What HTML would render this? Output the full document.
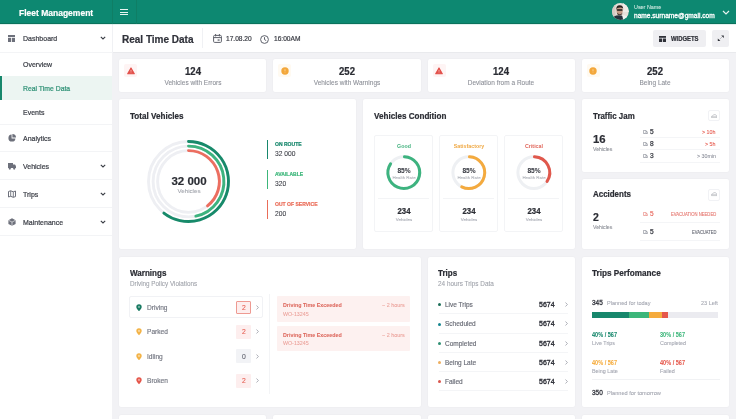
<!DOCTYPE html>
<html><head><meta charset="utf-8"><style>
html,body{margin:0;padding:0}
body{width:736px;height:419px;overflow:hidden;position:relative;background:#f2f2f5;font-family:"Liberation Sans",sans-serif}
.a{position:absolute}
.t{position:absolute;white-space:nowrap;line-height:1;will-change:transform}
</style></head><body>
<div class="a" style="left:0px;top:0px;width:736px;height:24px;background:#0d8871"></div>
<div class="a" style="left:0px;top:23px;width:736px;height:1px;background:#0b725c"></div>
<div class="a" style="left:112px;top:0px;width:1px;height:24px;background:#0f7e65"></div>
<div class="a" style="left:136px;top:0px;width:1px;height:24px;background:#0f7e65"></div>
<div class="t" style="left:19px;top:9px;font-size:8.5px;color:#fff;font-weight:700;-webkit-text-stroke:0.2px currentColor;transform:scaleY(1.15);transform-origin:50% 7px;">Fleet Management</div>
<div class="a" style="left:120px;top:9px;width:8px;height:1.3px;background:#e8f5f1"></div>
<div class="a" style="left:120px;top:11.5px;width:8px;height:1.3px;background:#e8f5f1"></div>
<div class="a" style="left:120px;top:14px;width:8px;height:1.3px;background:#e8f5f1"></div>
<svg class="a" style="left:612px;top:3.4px" width="17" height="17" viewBox="0 0 17 17"><defs><clipPath id="av"><circle cx="8.4" cy="8.5" r="8.4"/></clipPath></defs><g clip-path="url(#av)"><rect width="17" height="17" fill="#e6e0da"/><rect x="0" y="0" width="3.5" height="17" fill="#d7c9c4"/><rect x="11" y="0" width="6" height="9" fill="#efebe6"/><ellipse cx="7.6" cy="7.8" rx="3.1" ry="3.8" fill="#c49a86"/><path d="M4.3 7.2 Q3.8 2.2 7.8 2.3 Q11.6 2.5 11.1 6.6 L10.5 4.9 Q7.8 3.9 5 5.2Z" fill="#2a211e"/><rect x="4.8" y="6.3" width="5.8" height="1.5" rx="0.7" fill="#1b1818"/><path d="M5.2 9.8 Q7.6 12.6 10.2 9.9 L10.2 11.3 Q7.6 13 5.2 11.3Z" fill="#4a3630"/><path d="M0 17 Q1 12.4 6.8 12.2 Q9.6 12.2 11.4 13.6 L11.6 17Z" fill="#26303c"/><path d="M10.2 12.4 Q14.2 11.6 16.8 14.8 L17 17 H11.2Z" fill="#f0f2f0"/></g></svg>
<div class="t" style="left:634px;top:5px;font-size:5.4px;color:#cfe9e1;-webkit-text-stroke:0.08px currentColor;">User Name</div>
<div class="t" style="left:634px;top:13px;font-size:6.6px;color:#fff;-webkit-text-stroke:0.08px currentColor;-webkit-text-stroke:0.3px currentColor;">name.surname@gmail.com</div>
<svg class="a" style="left:722px;top:10px" width="8" height="5" viewBox="0 0 8 5"><path d="M1 1 L4 4 L7 1" fill="none" stroke="#e6f3ef" stroke-width="1.2"/></svg>
<div class="a" style="left:0px;top:24px;width:112px;height:395px;background:#fff"></div>
<div class="a" style="left:112px;top:24px;width:1px;height:28px;background:#f0f1f4"></div>
<div class="a" style="left:0px;top:52px;width:112px;height:1px;background:#f3f4f6"></div>
<div class="a" style="left:0px;top:123.5px;width:112px;height:1px;background:#f3f4f6"></div>
<div class="a" style="left:0px;top:151px;width:112px;height:1px;background:#f3f4f6"></div>
<div class="a" style="left:0px;top:179px;width:112px;height:1px;background:#f3f4f6"></div>
<div class="a" style="left:0px;top:207px;width:112px;height:1px;background:#f3f4f6"></div>
<div class="a" style="left:0px;top:235px;width:112px;height:1px;background:#f3f4f6"></div>
<div class="a" style="left:0px;top:76px;width:112px;height:24px;background:#ecf5f2"></div>
<div class="a" style="left:0px;top:76px;width:2px;height:24px;background:#17876c"></div>
<div class="t" style="left:23px;top:35px;font-size:7px;color:#3b3e46;-webkit-text-stroke:0.08px currentColor;transform:scaleY(1.12);transform-origin:50% 6px;-webkit-text-stroke:0.2px currentColor;">Dashboard</div>
<div class="t" style="left:23px;top:61px;font-size:7px;color:#3b3e46;-webkit-text-stroke:0.08px currentColor;transform:scaleY(1.12);transform-origin:50% 6px;-webkit-text-stroke:0.2px currentColor;">Overview</div>
<div class="t" style="left:23px;top:86px;font-size:6.85px;color:#2f9176;-webkit-text-stroke:0.08px currentColor;transform:scaleY(1.12);transform-origin:50% 5px;-webkit-text-stroke:0.2px currentColor;">Real Time Data</div>
<div class="t" style="left:23px;top:109px;font-size:7px;color:#3b3e46;-webkit-text-stroke:0.08px currentColor;transform:scaleY(1.12);transform-origin:50% 6px;-webkit-text-stroke:0.2px currentColor;">Events</div>
<div class="t" style="left:23px;top:135px;font-size:7px;color:#3b3e46;-webkit-text-stroke:0.08px currentColor;transform:scaleY(1.12);transform-origin:50% 6px;-webkit-text-stroke:0.2px currentColor;">Analytics</div>
<div class="t" style="left:23px;top:163px;font-size:7px;color:#3b3e46;-webkit-text-stroke:0.08px currentColor;transform:scaleY(1.12);transform-origin:50% 6px;-webkit-text-stroke:0.2px currentColor;">Vehicles</div>
<div class="t" style="left:23px;top:191px;font-size:7px;color:#3b3e46;-webkit-text-stroke:0.08px currentColor;transform:scaleY(1.12);transform-origin:50% 6px;-webkit-text-stroke:0.2px currentColor;">Trips</div>
<div class="t" style="left:23px;top:219px;font-size:7px;color:#3b3e46;-webkit-text-stroke:0.08px currentColor;transform:scaleY(1.12);transform-origin:50% 6px;-webkit-text-stroke:0.2px currentColor;">Maintenance</div>
<svg class="a" style="left:100.3px;top:36.300000000000004px" width="6" height="4" viewBox="0 0 6 4"><path d="M0.8 0.8 L3 3 L5.2 0.8" fill="none" stroke="#3b3e46" stroke-width="1.1"/></svg>
<svg class="a" style="left:100.3px;top:163.7px" width="6" height="4" viewBox="0 0 6 4"><path d="M0.8 0.8 L3 3 L5.2 0.8" fill="none" stroke="#3b3e46" stroke-width="1.1"/></svg>
<svg class="a" style="left:100.3px;top:191.7px" width="6" height="4" viewBox="0 0 6 4"><path d="M0.8 0.8 L3 3 L5.2 0.8" fill="none" stroke="#3b3e46" stroke-width="1.1"/></svg>
<svg class="a" style="left:100.3px;top:219.7px" width="6" height="4" viewBox="0 0 6 4"><path d="M0.8 0.8 L3 3 L5.2 0.8" fill="none" stroke="#3b3e46" stroke-width="1.1"/></svg>
<svg class="a" style="left:8px;top:35px" width="7" height="7" viewBox="0 0 7 7"><rect x="0" y="0" width="7" height="2" fill="#6d707b"/><rect x="0" y="2.8" width="3" height="4.2" fill="#6d707b"/><rect x="3.8" y="2.8" width="3.2" height="4.2" fill="#6d707b"/></svg>
<svg class="a" style="left:7.5px;top:133.5px" width="8" height="8" viewBox="0 0 8 8"><path d="M3.6 0.6 A3.5 3.5 0 1 0 7.4 4.4 L3.6 4.4Z" fill="#6d707b"/><path d="M4.4 0 A3.6 3.6 0 0 1 8 3.6 L4.4 3.6Z" fill="#6d707b"/></svg>
<svg class="a" style="left:7.5px;top:161.5px" width="8" height="8" viewBox="0 0 8 8"><path d="M0 1 H5 V6 H0Z" fill="#6d707b"/><path d="M5 2.5 H7 L8 4.2 V6 H5Z" fill="#6d707b"/><circle cx="1.8" cy="6.6" r="1.1" fill="#6d707b"/><circle cx="6.2" cy="6.6" r="1.1" fill="#6d707b"/></svg>
<svg class="a" style="left:7.5px;top:189.5px" width="8" height="8" viewBox="0 0 8 8"><path d="M0.5 1.5 L2.7 0.8 L5.3 1.8 L7.5 1 V6.6 L5.3 7.3 L2.7 6.3 L0.5 7Z" fill="none" stroke="#6d707b" stroke-width="1"/><path d="M2.7 0.8 V6.3 M5.3 1.8 V7.3" stroke="#6d707b" stroke-width="0.9"/></svg>
<svg class="a" style="left:7.5px;top:217.5px" width="8" height="8" viewBox="0 0 8 8"><path d="M4 0.3 L7.6 2.2 V5.9 L4 7.8 L0.4 5.9 V2.2Z" fill="#6d707b"/><path d="M0.6 2.3 L4 4.1 L7.4 2.3 M4 4.1 V7.6" fill="none" stroke="#fff" stroke-width="0.6"/></svg>
<div class="a" style="left:113px;top:24px;width:623px;height:28px;background:#fff"></div>
<div class="a" style="left:113px;top:52px;width:623px;height:1px;background:#e9eaed"></div>
<div class="a" style="left:202px;top:28px;width:1px;height:20px;background:#f0f1f4"></div>
<div class="t" style="left:121.5px;top:35px;font-size:10px;color:#30323a;font-weight:700;-webkit-text-stroke:0.2px currentColor;">Real Time Data</div>
<svg class="a" style="left:212.5px;top:34px" width="9" height="9" viewBox="0 0 9 9"><rect x="0.6" y="1.4" width="7.8" height="7" rx="1" fill="none" stroke="#5e616b" stroke-width="1"/><path d="M0.6 3.6 H8.4 M2.6 0 V2.4 M6.4 0 V2.4" stroke="#5e616b" stroke-width="1"/><rect x="4.6" y="5.4" width="2" height="1.3" fill="#5e616b"/></svg>
<div class="t" style="left:225.7px;top:36px;font-size:6.6px;color:#3a3c44;-webkit-text-stroke:0.08px currentColor;-webkit-text-stroke:0.2px currentColor;">17.08.20</div>
<svg class="a" style="left:260px;top:34.5px" width="9" height="9" viewBox="0 0 9 9"><circle cx="4.5" cy="4.5" r="3.9" fill="none" stroke="#5e616b" stroke-width="1"/><path d="M4.5 2.2 V4.6 L6.2 5.6" fill="none" stroke="#5e616b" stroke-width="1"/></svg>
<div class="t" style="left:273.6px;top:36px;font-size:6.6px;color:#3a3c44;-webkit-text-stroke:0.08px currentColor;-webkit-text-stroke:0.2px currentColor;">16:00AM</div>
<div class="a" style="left:653px;top:30px;width:53px;height:17px;background:#efeff2;border-radius:2px"></div>
<svg class="a" style="left:659px;top:35.5px" width="7" height="6.5" viewBox="0 0 7 6.5"><rect x="0" y="0" width="7" height="1.8" fill="#2f3138"/><rect x="0" y="2.5" width="3" height="4" fill="#2f3138"/><rect x="3.8" y="2.5" width="3.2" height="4" fill="#2f3138"/></svg>
<div class="t" style="left:670.7px;top:37px;font-size:5.9px;color:#2f3138;font-weight:700;-webkit-text-stroke:0.2px currentColor;transform:scaleY(1.15);transform-origin:50% 4px;">WIDGETS</div>
<div class="a" style="left:711.5px;top:30px;width:17px;height:17px;background:#efeff2;border-radius:2px"></div>
<svg class="a" style="left:716.5px;top:35px" width="8" height="7" viewBox="0 0 8 7"><path d="M2.6 4.4 L5.2 1.8" stroke="#9a9ca3" stroke-width="0.6"/><path d="M4.2 0.4 H6.8 V3Z M0.8 3.4 V6 H3.4Z" fill="#2f3138"/></svg>
<div class="a" style="left:119px;top:59px;width:147.25px;height:33px;background:#fff;border-radius:2px;box-shadow:0 0 1.5px rgba(40,40,70,0.07)"></div>
<div class="a" style="left:124px;top:64px;width:13px;height:13px;background:#fef4f4;border-radius:2px"></div>
<svg class="a" style="left:126.5px;top:67px" width="8" height="7.5" viewBox="0 0 8 7.5"><path d="M4 0.9 L7.3 6.7 H0.7Z" fill="#e2504a" stroke="#e2504a" stroke-width="1.1" stroke-linejoin="round"/><path d="M4 2.9 V4.7" stroke="#f7c5c2" stroke-width="0.8"/><circle cx="4" cy="5.7" r="0.4" fill="#f7c5c2"/></svg>
<div class="t" style="left:-7.375px;width:400px;text-align:center;top:67px;font-size:9.6px;color:#2b2d34;font-weight:700;-webkit-text-stroke:0.2px currentColor;transform:scaleY(1.15);transform-origin:50% 8px;">124</div>
<div class="t" style="left:-7.375px;width:400px;text-align:center;top:80px;font-size:6.5px;color:#8b8e96;-webkit-text-stroke:0.08px currentColor;">Vehicles with Errors</div>
<div class="a" style="left:273.25px;top:59px;width:147.25px;height:33px;background:#fff;border-radius:2px;box-shadow:0 0 1.5px rgba(40,40,70,0.07)"></div>
<div class="a" style="left:278.25px;top:64px;width:13px;height:13px;background:#fffaf1;border-radius:2px"></div>
<svg class="a" style="left:280.75px;top:66.5px" width="8" height="8" viewBox="0 0 8 8"><circle cx="4" cy="4" r="3.7" fill="#f3a73a"/><path d="M4 2.2 V4.4" stroke="#fbd9a8" stroke-width="0.8"/><circle cx="4" cy="5.6" r="0.4" fill="#fbd9a8"/></svg>
<div class="t" style="left:146.875px;width:400px;text-align:center;top:67px;font-size:9.6px;color:#2b2d34;font-weight:700;-webkit-text-stroke:0.2px currentColor;transform:scaleY(1.15);transform-origin:50% 8px;">252</div>
<div class="t" style="left:146.875px;width:400px;text-align:center;top:80px;font-size:6.5px;color:#8b8e96;-webkit-text-stroke:0.08px currentColor;">Vehicles with Warnings</div>
<div class="a" style="left:427.5px;top:59px;width:147.25px;height:33px;background:#fff;border-radius:2px;box-shadow:0 0 1.5px rgba(40,40,70,0.07)"></div>
<div class="a" style="left:432.5px;top:64px;width:13px;height:13px;background:#fef4f4;border-radius:2px"></div>
<svg class="a" style="left:435.0px;top:67px" width="8" height="7.5" viewBox="0 0 8 7.5"><path d="M4 0.9 L7.3 6.7 H0.7Z" fill="#e2504a" stroke="#e2504a" stroke-width="1.1" stroke-linejoin="round"/><path d="M4 2.9 V4.7" stroke="#f7c5c2" stroke-width="0.8"/><circle cx="4" cy="5.7" r="0.4" fill="#f7c5c2"/></svg>
<div class="t" style="left:301.125px;width:400px;text-align:center;top:67px;font-size:9.6px;color:#2b2d34;font-weight:700;-webkit-text-stroke:0.2px currentColor;transform:scaleY(1.15);transform-origin:50% 8px;">124</div>
<div class="t" style="left:301.125px;width:400px;text-align:center;top:80px;font-size:6.5px;color:#8b8e96;-webkit-text-stroke:0.08px currentColor;">Deviation from a Route</div>
<div class="a" style="left:581.75px;top:59px;width:147.25px;height:33px;background:#fff;border-radius:2px;box-shadow:0 0 1.5px rgba(40,40,70,0.07)"></div>
<div class="a" style="left:586.75px;top:64px;width:13px;height:13px;background:#fffaf1;border-radius:2px"></div>
<svg class="a" style="left:589.25px;top:66.5px" width="8" height="8" viewBox="0 0 8 8"><circle cx="4" cy="4" r="3.7" fill="#f3a73a"/><path d="M4 2.2 V4.4" stroke="#fbd9a8" stroke-width="0.8"/><circle cx="4" cy="5.6" r="0.4" fill="#fbd9a8"/></svg>
<div class="t" style="left:455.375px;width:400px;text-align:center;top:67px;font-size:9.6px;color:#2b2d34;font-weight:700;-webkit-text-stroke:0.2px currentColor;transform:scaleY(1.15);transform-origin:50% 8px;">252</div>
<div class="t" style="left:455.375px;width:400px;text-align:center;top:80px;font-size:6.5px;color:#8b8e96;-webkit-text-stroke:0.08px currentColor;">Being Late</div>
<div class="a" style="left:119px;top:99px;width:237px;height:150px;background:#fff;border-radius:2px;box-shadow:0 0 1.5px rgba(40,40,70,0.07)"></div>
<div class="t" style="left:130px;top:113px;font-size:8.1px;color:#2b2d34;font-weight:700;-webkit-text-stroke:0.2px currentColor;transform:scaleY(1.15);transform-origin:50% 6px;">Total Vehicles</div>
<svg class="a" style="left:0;top:0" width="736" height="419"><circle cx="188.5" cy="181.5" r="40" fill="none" stroke="#eeeff3" stroke-width="2.9"/><path d="M188.50 141.50 A40 40 0 1 1 163.87 213.02" fill="none" stroke="#178a6a" stroke-width="2.9" stroke-linecap="round"/><circle cx="188.5" cy="181.5" r="35.4" fill="none" stroke="#eeeff3" stroke-width="2.9"/><path d="M188.50 146.10 A35.4 35.4 0 0 1 195.86 216.13" fill="none" stroke="#3db37f" stroke-width="2.9" stroke-linecap="round"/><circle cx="188.5" cy="181.5" r="30.9" fill="none" stroke="#eeeff3" stroke-width="2.9"/><path d="M188.50 150.60 A30.9 30.9 0 0 1 207.52 205.85" fill="none" stroke="#ec6e60" stroke-width="2.9" stroke-linecap="round"/></svg>
<div class="t" style="left:-11.400000000000006px;width:400px;text-align:center;top:176px;font-size:11.5px;color:#2b2d34;font-weight:700;-webkit-text-stroke:0.2px currentColor;">32 000</div>
<div class="t" style="left:-10.699999999999989px;width:400px;text-align:center;top:188px;font-size:6.2px;color:#a0a3ab;-webkit-text-stroke:0.08px currentColor;">Vehicles</div>
<div class="a" style="left:266.5px;top:140px;width:1.5px;height:19.3px;background:#17876c"></div>
<div class="t" style="left:275px;top:142px;font-size:5.05px;color:#17876c;font-weight:700;-webkit-text-stroke:0.2px currentColor;transform:scaleY(1.15);transform-origin:50% 4px;">ON ROUTE</div>
<div class="t" style="left:275px;top:151px;font-size:6.7px;color:#3a3c44;-webkit-text-stroke:0.08px currentColor;">32 000</div>
<div class="a" style="left:266.5px;top:170px;width:1.5px;height:19.3px;background:#3cb67a"></div>
<div class="t" style="left:275px;top:172px;font-size:5.05px;color:#3cb67a;font-weight:700;-webkit-text-stroke:0.2px currentColor;transform:scaleY(1.15);transform-origin:50% 4px;">AVAILABLE</div>
<div class="t" style="left:275px;top:181px;font-size:6.7px;color:#3a3c44;-webkit-text-stroke:0.08px currentColor;">320</div>
<div class="a" style="left:266.5px;top:200px;width:1.5px;height:19.3px;background:#ea6d59"></div>
<div class="t" style="left:275px;top:202px;font-size:5.05px;color:#ea6d59;font-weight:700;-webkit-text-stroke:0.2px currentColor;transform:scaleY(1.15);transform-origin:50% 4px;">OUT OF SERVICE</div>
<div class="t" style="left:275px;top:211px;font-size:6.7px;color:#3a3c44;-webkit-text-stroke:0.08px currentColor;">200</div>
<div class="a" style="left:363px;top:99px;width:212px;height:150px;background:#fff;border-radius:2px;box-shadow:0 0 1.5px rgba(40,40,70,0.07)"></div>
<div class="t" style="left:374px;top:113px;font-size:8.1px;color:#2b2d34;font-weight:700;-webkit-text-stroke:0.2px currentColor;transform:scaleY(1.15);transform-origin:50% 6px;">Vehicles Condition</div>
<div class="a" style="left:374.3px;top:134.5px;width:59px;height:97px;border:1px solid #f3f4f6;box-sizing:border-box;border-radius:2px"></div>
<div class="a" style="left:378.3px;top:198px;width:51px;height:1px;background:#f3f4f6"></div>
<div class="t" style="left:203.8px;width:400px;text-align:center;top:144px;font-size:5.3px;color:#43b27f;font-weight:700;-webkit-text-stroke:0.2px currentColor;transform:scaleY(1.15);transform-origin:50% 4px;-webkit-text-stroke:0px;">Good</div>
<div class="t" style="left:203.8px;width:400px;text-align:center;top:168px;font-size:6.6px;color:#3a3c44;font-weight:700;-webkit-text-stroke:0.2px currentColor;transform:scaleY(1.15);transform-origin:50% 5px;-webkit-text-stroke:0.05px currentColor;">85%</div>
<div class="t" style="left:203.8px;width:400px;text-align:center;top:176px;font-size:4.4px;color:#aeb1b8;-webkit-text-stroke:0.08px currentColor;">Health Rate</div>
<div class="t" style="left:203.8px;width:400px;text-align:center;top:208px;font-size:7.8px;color:#2b2d34;font-weight:700;-webkit-text-stroke:0.2px currentColor;transform:scaleY(1.15);transform-origin:50% 6px;">234</div>
<div class="t" style="left:203.8px;width:400px;text-align:center;top:218px;font-size:4.4px;color:#a3a6b0;-webkit-text-stroke:0.08px currentColor;">Vehicles</div>
<div class="a" style="left:439.3px;top:134.5px;width:59px;height:97px;border:1px solid #f3f4f6;box-sizing:border-box;border-radius:2px"></div>
<div class="a" style="left:443.3px;top:198px;width:51px;height:1px;background:#f3f4f6"></div>
<div class="t" style="left:268.8px;width:400px;text-align:center;top:144px;font-size:5.3px;color:#efa843;font-weight:700;-webkit-text-stroke:0.2px currentColor;transform:scaleY(1.15);transform-origin:50% 4px;-webkit-text-stroke:0px;">Satisfactory</div>
<div class="t" style="left:268.8px;width:400px;text-align:center;top:168px;font-size:6.6px;color:#3a3c44;font-weight:700;-webkit-text-stroke:0.2px currentColor;transform:scaleY(1.15);transform-origin:50% 5px;-webkit-text-stroke:0.05px currentColor;">85%</div>
<div class="t" style="left:268.8px;width:400px;text-align:center;top:176px;font-size:4.4px;color:#aeb1b8;-webkit-text-stroke:0.08px currentColor;">Health Rate</div>
<div class="t" style="left:268.8px;width:400px;text-align:center;top:208px;font-size:7.8px;color:#2b2d34;font-weight:700;-webkit-text-stroke:0.2px currentColor;transform:scaleY(1.15);transform-origin:50% 6px;">234</div>
<div class="t" style="left:268.8px;width:400px;text-align:center;top:218px;font-size:4.4px;color:#a3a6b0;-webkit-text-stroke:0.08px currentColor;">Vehicles</div>
<div class="a" style="left:504.3px;top:134.5px;width:59px;height:97px;border:1px solid #f3f4f6;box-sizing:border-box;border-radius:2px"></div>
<div class="a" style="left:508.3px;top:198px;width:51px;height:1px;background:#f3f4f6"></div>
<div class="t" style="left:333.79999999999995px;width:400px;text-align:center;top:144px;font-size:5.3px;color:#e0665b;font-weight:700;-webkit-text-stroke:0.2px currentColor;transform:scaleY(1.15);transform-origin:50% 4px;-webkit-text-stroke:0px;">Critical</div>
<div class="t" style="left:333.79999999999995px;width:400px;text-align:center;top:168px;font-size:6.6px;color:#3a3c44;font-weight:700;-webkit-text-stroke:0.2px currentColor;transform:scaleY(1.15);transform-origin:50% 5px;-webkit-text-stroke:0.05px currentColor;">85%</div>
<div class="t" style="left:333.79999999999995px;width:400px;text-align:center;top:176px;font-size:4.4px;color:#aeb1b8;-webkit-text-stroke:0.08px currentColor;">Health Rate</div>
<div class="t" style="left:333.79999999999995px;width:400px;text-align:center;top:208px;font-size:7.8px;color:#2b2d34;font-weight:700;-webkit-text-stroke:0.2px currentColor;transform:scaleY(1.15);transform-origin:50% 6px;">234</div>
<div class="t" style="left:333.79999999999995px;width:400px;text-align:center;top:218px;font-size:4.4px;color:#a3a6b0;-webkit-text-stroke:0.08px currentColor;">Vehicles</div>
<svg class="a" style="left:0;top:0" width="736" height="419"><circle cx="403.8" cy="172.6" r="15.9" fill="none" stroke="#eef0f3" stroke-width="3"/><path d="M403.80 156.70 A15.9 15.9 0 1 1 390.17 164.41" transform="rotate(2.5 403.8 172.6)" fill="none" stroke="#3db37f" stroke-width="3" stroke-linecap="round"/><circle cx="468.8" cy="172.6" r="15.9" fill="none" stroke="#eef0f3" stroke-width="3"/><path d="M468.80 156.70 A15.9 15.9 0 1 1 462.38 187.15" transform="rotate(2.5 468.8 172.6)" fill="none" stroke="#f4aa3e" stroke-width="3" stroke-linecap="round"/><circle cx="533.8" cy="172.6" r="15.9" fill="none" stroke="#eef0f3" stroke-width="3"/><path d="M533.80 156.70 A15.9 15.9 0 0 1 547.43 180.79" transform="rotate(2.5 533.8 172.6)" fill="none" stroke="#e0584c" stroke-width="3" stroke-linecap="round"/></svg>
<div class="a" style="left:581.75px;top:99px;width:147.25px;height:73px;background:#fff;border-radius:2px;box-shadow:0 0 1.5px rgba(40,40,70,0.07)"></div>
<div class="t" style="left:592.5px;top:113px;font-size:7.9px;color:#2b2d34;font-weight:700;-webkit-text-stroke:0.2px currentColor;transform:scaleY(1.15);transform-origin:50% 6px;">Traffic Jam</div>
<div class="t" style="left:592.5px;top:134px;font-size:11.3px;color:#2b2d34;font-weight:700;-webkit-text-stroke:0.2px currentColor;">16</div>
<div class="t" style="left:592.5px;top:147px;font-size:5.2px;color:#8b8e96;-webkit-text-stroke:0.08px currentColor;">Vehicles</div>
<div class="a" style="left:708.2px;top:109.6px;width:11.6px;height:11px;background:#fff;border:0.6px solid #f1f2f5;box-sizing:border-box;border-radius:2px"></div>
<svg class="a" style="left:710.9px;top:113.6px" width="6.5" height="4.5" viewBox="0 0 6.5 4.5"><path d="M0.4 3.6 V2.4 L1.6 2 L2.6 0.7 H4.6 L5.6 2 L6.1 2.3 V3.6Z" fill="none" stroke="#a9acb3" stroke-width="0.6"/><path d="M0.8 2.6 H6" stroke="#a9acb3" stroke-width="0.5"/></svg>
<svg class="a" style="left:643px;top:129.7px" width="5" height="4.5" viewBox="0 0 5 4.5"><path d="M0.4 0.4 H3 V3.4 H0.4Z M3 1.4 H4 L4.6 2.3 V3.4 H3" fill="none" stroke="#8d909b" stroke-width="0.7"/><circle cx="1.2" cy="3.9" r="0.5" fill="#8d909b"/><circle cx="3.8" cy="3.9" r="0.5" fill="#8d909b"/></svg>
<div class="t" style="left:650px;top:129px;font-size:6.6px;color:#3a3c44;-webkit-text-stroke:0.08px currentColor;-webkit-text-stroke:0.25px currentColor;">5</div>
<div class="t" style="right:20.5px;top:130px;font-size:5.3px;color:#e5574b;-webkit-text-stroke:0.08px currentColor;">&gt; 10h</div>
<div class="a" style="left:640px;top:137.3px;width:80px;height:0.7px;background:#f4f5f7"></div>
<svg class="a" style="left:643px;top:141.79999999999998px" width="5" height="4.5" viewBox="0 0 5 4.5"><path d="M0.4 0.4 H3 V3.4 H0.4Z M3 1.4 H4 L4.6 2.3 V3.4 H3" fill="none" stroke="#8d909b" stroke-width="0.7"/><circle cx="1.2" cy="3.9" r="0.5" fill="#8d909b"/><circle cx="3.8" cy="3.9" r="0.5" fill="#8d909b"/></svg>
<div class="t" style="left:650px;top:141px;font-size:6.6px;color:#3a3c44;-webkit-text-stroke:0.08px currentColor;-webkit-text-stroke:0.25px currentColor;">8</div>
<div class="t" style="right:20.5px;top:142px;font-size:5.3px;color:#e5574b;-webkit-text-stroke:0.08px currentColor;">&gt; 5h</div>
<div class="a" style="left:640px;top:149.4px;width:80px;height:0.7px;background:#f4f5f7"></div>
<svg class="a" style="left:643px;top:153.89999999999998px" width="5" height="4.5" viewBox="0 0 5 4.5"><path d="M0.4 0.4 H3 V3.4 H0.4Z M3 1.4 H4 L4.6 2.3 V3.4 H3" fill="none" stroke="#8d909b" stroke-width="0.7"/><circle cx="1.2" cy="3.9" r="0.5" fill="#8d909b"/><circle cx="3.8" cy="3.9" r="0.5" fill="#8d909b"/></svg>
<div class="t" style="left:650px;top:153px;font-size:6.6px;color:#3a3c44;-webkit-text-stroke:0.08px currentColor;-webkit-text-stroke:0.25px currentColor;">3</div>
<div class="t" style="right:20.5px;top:154px;font-size:5.3px;color:#8d909b;-webkit-text-stroke:0.08px currentColor;">&gt; 30min</div>
<div class="a" style="left:640px;top:161.5px;width:80px;height:0.7px;background:#f4f5f7"></div>
<div class="a" style="left:581.75px;top:178.5px;width:147.25px;height:70.5px;background:#fff;border-radius:2px;box-shadow:0 0 1.5px rgba(40,40,70,0.07)"></div>
<div class="t" style="left:592.5px;top:191px;font-size:7.95px;color:#2b2d34;font-weight:700;-webkit-text-stroke:0.2px currentColor;transform:scaleY(1.15);transform-origin:50% 6px;">Accidents</div>
<div class="t" style="left:592.5px;top:212px;font-size:10.5px;color:#2b2d34;font-weight:700;-webkit-text-stroke:0.2px currentColor;">2</div>
<div class="t" style="left:592.5px;top:225px;font-size:5.2px;color:#8b8e96;-webkit-text-stroke:0.08px currentColor;">Vehicles</div>
<div class="a" style="left:708.4px;top:189.2px;width:11.4px;height:11.4px;background:#fff;border:0.6px solid #f1f2f5;box-sizing:border-box;border-radius:2px"></div>
<svg class="a" style="left:710.9px;top:192.2px" width="6.5" height="4.5" viewBox="0 0 6.5 4.5"><path d="M0.4 3.6 V2.4 L1.6 2 L2.6 0.7 H4.6 L5.6 2 L6.1 2.3 V3.6Z" fill="none" stroke="#a9acb3" stroke-width="0.6"/><path d="M0.8 2.6 H6" stroke="#a9acb3" stroke-width="0.5"/></svg>
<svg class="a" style="left:643px;top:211.8px" width="5" height="4.5" viewBox="0 0 5 4.5"><path d="M0.4 0.4 H3 V3.4 H0.4Z M3 1.4 H4 L4.6 2.3 V3.4 H3" fill="none" stroke="#e98a83" stroke-width="0.7"/><circle cx="1.2" cy="3.9" r="0.5" fill="#e98a83"/><circle cx="3.8" cy="3.9" r="0.5" fill="#e98a83"/></svg>
<div class="t" style="left:650px;top:211px;font-size:6.6px;color:#e5574b;-webkit-text-stroke:0.08px currentColor;">5</div>
<div class="t" style="right:20px;top:213px;font-size:4.2px;color:#e36f67;-webkit-text-stroke:0.08px currentColor;transform:scaleY(1.12);transform-origin:50% 3px;">EVACUATION NEEDED</div>
<div class="a" style="left:640px;top:222.3px;width:80px;height:0.7px;background:#f4f5f7"></div>
<svg class="a" style="left:643px;top:229.8px" width="5" height="4.5" viewBox="0 0 5 4.5"><path d="M0.4 0.4 H3 V3.4 H0.4Z M3 1.4 H4 L4.6 2.3 V3.4 H3" fill="none" stroke="#8d909b" stroke-width="0.7"/><circle cx="1.2" cy="3.9" r="0.5" fill="#8d909b"/><circle cx="3.8" cy="3.9" r="0.5" fill="#8d909b"/></svg>
<div class="t" style="left:650px;top:229px;font-size:6.6px;color:#3a3c44;-webkit-text-stroke:0.08px currentColor;-webkit-text-stroke:0.25px currentColor;">5</div>
<div class="t" style="right:20px;top:231px;font-size:4.1px;color:#5d606b;-webkit-text-stroke:0.08px currentColor;transform:scaleY(1.12);transform-origin:50% 3px;">EVACUATED</div>
<div class="a" style="left:640px;top:240px;width:80px;height:0.7px;background:#f4f5f7"></div>
<div class="a" style="left:119px;top:256.5px;width:301.5px;height:150px;background:#fff;border-radius:2px;box-shadow:0 0 1.5px rgba(40,40,70,0.07)"></div>
<div class="t" style="left:130px;top:270px;font-size:8.05px;color:#2b2d34;font-weight:700;-webkit-text-stroke:0.2px currentColor;transform:scaleY(1.15);transform-origin:50% 6px;">Warnings</div>
<div class="t" style="left:130px;top:281px;font-size:6.3px;color:#9fa2aa;-webkit-text-stroke:0.08px currentColor;">Driving Policy Violations</div>
<div class="a" style="left:129.3px;top:295.8px;width:134px;height:22.6px;border:1px solid #f1f2f5;box-sizing:border-box;border-radius:2px"></div>
<svg class="a" style="left:135.8px;top:303.7px" width="6" height="7.5" viewBox="0 0 6 7.5"><path d="M3 7.3 C1.2 5.2 0.3 4 0.3 2.9 A2.7 2.7 0 0 1 5.7 2.9 C5.7 4 4.8 5.2 3 7.3Z" fill="#187a62"/><circle cx="3" cy="2.9" r="1.1" fill="#fff" fill-opacity="0.45"/></svg>
<div class="t" style="left:146.6px;top:305px;font-size:6.6px;color:#747782;-webkit-text-stroke:0.08px currentColor;-webkit-text-stroke:0.15px currentColor;">Driving</div>
<div class="a" style="left:236.4px;top:300.5px;width:14.2px;height:13.9px;background:#fdeeee;border-radius:1px;border:1px solid #ee9a92;box-sizing:border-box"></div>
<div class="t" style="left:43.5px;width:400px;text-align:center;top:305px;font-size:6.8px;color:#e5574b;-webkit-text-stroke:0.08px currentColor;">2</div>
<svg class="a" style="left:255.5px;top:304.8px" width="3" height="5" viewBox="0 0 3 5"><path d="M0.5 0.5 L2.4 2.5 L0.5 4.5" fill="none" stroke="#9a9da6" stroke-width="0.8"/></svg>
<svg class="a" style="left:135.8px;top:328.15px" width="6" height="7.5" viewBox="0 0 6 7.5"><path d="M3 7.3 C1.2 5.2 0.3 4 0.3 2.9 A2.7 2.7 0 0 1 5.7 2.9 C5.7 4 4.8 5.2 3 7.3Z" fill="#f3b347"/><circle cx="3" cy="2.9" r="1.1" fill="#fff" fill-opacity="0.45"/></svg>
<div class="t" style="left:146.6px;top:329px;font-size:6.6px;color:#747782;-webkit-text-stroke:0.08px currentColor;-webkit-text-stroke:0.15px currentColor;">Parked</div>
<div class="a" style="left:236.4px;top:324.95px;width:14.2px;height:13.9px;background:#fdeeee;border-radius:1px"></div>
<div class="t" style="left:43.5px;width:400px;text-align:center;top:329px;font-size:6.8px;color:#e5574b;-webkit-text-stroke:0.08px currentColor;">2</div>
<svg class="a" style="left:255.5px;top:329.25px" width="3" height="5" viewBox="0 0 3 5"><path d="M0.5 0.5 L2.4 2.5 L0.5 4.5" fill="none" stroke="#9a9da6" stroke-width="0.8"/></svg>
<svg class="a" style="left:135.8px;top:352.59999999999997px" width="6" height="7.5" viewBox="0 0 6 7.5"><path d="M3 7.3 C1.2 5.2 0.3 4 0.3 2.9 A2.7 2.7 0 0 1 5.7 2.9 C5.7 4 4.8 5.2 3 7.3Z" fill="#f3b347"/><circle cx="3" cy="2.9" r="1.1" fill="#fff" fill-opacity="0.45"/></svg>
<div class="t" style="left:146.6px;top:354px;font-size:6.6px;color:#747782;-webkit-text-stroke:0.08px currentColor;-webkit-text-stroke:0.15px currentColor;">Idling</div>
<div class="a" style="left:236.4px;top:349.4px;width:14.2px;height:13.9px;background:#f2f3f6;border-radius:1px"></div>
<div class="t" style="left:43.5px;width:400px;text-align:center;top:354px;font-size:6.8px;color:#5d606b;-webkit-text-stroke:0.08px currentColor;">0</div>
<svg class="a" style="left:255.5px;top:353.7px" width="3" height="5" viewBox="0 0 3 5"><path d="M0.5 0.5 L2.4 2.5 L0.5 4.5" fill="none" stroke="#9a9da6" stroke-width="0.8"/></svg>
<svg class="a" style="left:135.8px;top:377.05px" width="6" height="7.5" viewBox="0 0 6 7.5"><path d="M3 7.3 C1.2 5.2 0.3 4 0.3 2.9 A2.7 2.7 0 0 1 5.7 2.9 C5.7 4 4.8 5.2 3 7.3Z" fill="#e5574b"/><circle cx="3" cy="2.9" r="1.1" fill="#fff" fill-opacity="0.45"/></svg>
<div class="t" style="left:146.6px;top:378px;font-size:6.6px;color:#747782;-webkit-text-stroke:0.08px currentColor;-webkit-text-stroke:0.15px currentColor;">Broken</div>
<div class="a" style="left:236.4px;top:373.85px;width:14.2px;height:13.9px;background:#fdeeee;border-radius:1px"></div>
<div class="t" style="left:43.5px;width:400px;text-align:center;top:378px;font-size:6.8px;color:#e5574b;-webkit-text-stroke:0.08px currentColor;">2</div>
<svg class="a" style="left:255.5px;top:378.15000000000003px" width="3" height="5" viewBox="0 0 3 5"><path d="M0.5 0.5 L2.4 2.5 L0.5 4.5" fill="none" stroke="#9a9da6" stroke-width="0.8"/></svg>
<div class="a" style="left:269px;top:293.5px;width:0.8px;height:100px;background:#f3f4f6"></div>
<div class="a" style="left:277.4px;top:296.0px;width:132.2px;height:25.5px;background:#fdf1f0;border-radius:1px"></div>
<div class="t" style="left:282.6px;top:303px;font-size:5.35px;color:#dc675c;font-weight:700;-webkit-text-stroke:0.2px currentColor;transform:scaleY(1.15);transform-origin:50% 4px;-webkit-text-stroke:0.05px currentColor;">Driving Time Exceeded</div>
<div class="t" style="left:282.6px;top:312px;font-size:5.3px;color:#eba29b;-webkit-text-stroke:0.08px currentColor;">WO-13245</div>
<div class="t" style="right:331.5px;top:303px;font-size:5.4px;color:#eba29b;-webkit-text-stroke:0.08px currentColor;">~ 2 hours</div>
<div class="a" style="left:277.4px;top:325.6px;width:132.2px;height:25.5px;background:#fdf1f0;border-radius:1px"></div>
<div class="t" style="left:282.6px;top:333px;font-size:5.35px;color:#dc675c;font-weight:700;-webkit-text-stroke:0.2px currentColor;transform:scaleY(1.15);transform-origin:50% 4px;-webkit-text-stroke:0.05px currentColor;">Driving Time Exceeded</div>
<div class="t" style="left:282.6px;top:341px;font-size:5.3px;color:#eba29b;-webkit-text-stroke:0.08px currentColor;">WO-13245</div>
<div class="t" style="right:331.5px;top:333px;font-size:5.4px;color:#eba29b;-webkit-text-stroke:0.08px currentColor;">~ 2 hours</div>
<div class="a" style="left:427.5px;top:256.5px;width:147.25px;height:150px;background:#fff;border-radius:2px;box-shadow:0 0 1.5px rgba(40,40,70,0.07)"></div>
<div class="t" style="left:438.1px;top:270px;font-size:8px;color:#2b2d34;font-weight:700;-webkit-text-stroke:0.2px currentColor;transform:scaleY(1.15);transform-origin:50% 6px;">Trips</div>
<div class="t" style="left:438.1px;top:281px;font-size:6.4px;color:#9fa2aa;-webkit-text-stroke:0.08px currentColor;">24 hours Trips Data</div>
<div class="a" style="left:438.2px;top:303.3px;width:3.2px;height:3.2px;background:#1d6e58;border-radius:50%"></div>
<div class="t" style="left:445.2px;top:302px;font-size:6.5px;color:#686b75;-webkit-text-stroke:0.08px currentColor;-webkit-text-stroke:0.15px currentColor;">Live Trips</div>
<div class="t" style="right:181.5px;top:301px;font-size:7px;color:#30323a;-webkit-text-stroke:0.08px currentColor;transform:scaleY(1.05);transform-origin:50% 6px;-webkit-text-stroke:0.35px currentColor;">5674</div>
<svg class="a" style="left:564.5px;top:302.0px" width="3" height="5" viewBox="0 0 3 5"><path d="M0.5 0.5 L2.4 2.5 L0.5 4.5" fill="none" stroke="#9a9da6" stroke-width="0.8"/></svg>
<div class="a" style="left:439.4px;top:313.3px;width:128.3px;height:0.7px;background:#f4f5f7"></div>
<div class="a" style="left:438.2px;top:322.55px;width:3.2px;height:3.2px;background:#15868f;border-radius:50%"></div>
<div class="t" style="left:445.2px;top:321px;font-size:6.5px;color:#686b75;-webkit-text-stroke:0.08px currentColor;-webkit-text-stroke:0.15px currentColor;">Scheduled</div>
<div class="t" style="right:181.5px;top:320px;font-size:7px;color:#30323a;-webkit-text-stroke:0.08px currentColor;transform:scaleY(1.05);transform-origin:50% 6px;-webkit-text-stroke:0.35px currentColor;">5674</div>
<svg class="a" style="left:564.5px;top:321.25px" width="3" height="5" viewBox="0 0 3 5"><path d="M0.5 0.5 L2.4 2.5 L0.5 4.5" fill="none" stroke="#9a9da6" stroke-width="0.8"/></svg>
<div class="a" style="left:439.4px;top:332.55px;width:128.3px;height:0.7px;background:#f4f5f7"></div>
<div class="a" style="left:438.2px;top:341.8px;width:3.2px;height:3.2px;background:#2f8f73;border-radius:50%"></div>
<div class="t" style="left:445.2px;top:341px;font-size:6.5px;color:#686b75;-webkit-text-stroke:0.08px currentColor;-webkit-text-stroke:0.15px currentColor;">Completed</div>
<div class="t" style="right:181.5px;top:340px;font-size:7px;color:#30323a;-webkit-text-stroke:0.08px currentColor;transform:scaleY(1.05);transform-origin:50% 6px;-webkit-text-stroke:0.35px currentColor;">5674</div>
<svg class="a" style="left:564.5px;top:340.5px" width="3" height="5" viewBox="0 0 3 5"><path d="M0.5 0.5 L2.4 2.5 L0.5 4.5" fill="none" stroke="#9a9da6" stroke-width="0.8"/></svg>
<div class="a" style="left:439.4px;top:351.8px;width:128.3px;height:0.7px;background:#f4f5f7"></div>
<div class="a" style="left:438.2px;top:361.05px;width:3.2px;height:3.2px;background:#eeae5e;border-radius:50%"></div>
<div class="t" style="left:445.2px;top:360px;font-size:6.5px;color:#686b75;-webkit-text-stroke:0.08px currentColor;-webkit-text-stroke:0.15px currentColor;">Being Late</div>
<div class="t" style="right:181.5px;top:359px;font-size:7px;color:#30323a;-webkit-text-stroke:0.08px currentColor;transform:scaleY(1.05);transform-origin:50% 6px;-webkit-text-stroke:0.35px currentColor;">5674</div>
<svg class="a" style="left:564.5px;top:359.75px" width="3" height="5" viewBox="0 0 3 5"><path d="M0.5 0.5 L2.4 2.5 L0.5 4.5" fill="none" stroke="#9a9da6" stroke-width="0.8"/></svg>
<div class="a" style="left:439.4px;top:371.05px;width:128.3px;height:0.7px;background:#f4f5f7"></div>
<div class="a" style="left:438.2px;top:380.3px;width:3.2px;height:3.2px;background:#d9564e;border-radius:50%"></div>
<div class="t" style="left:445.2px;top:379px;font-size:6.5px;color:#686b75;-webkit-text-stroke:0.08px currentColor;-webkit-text-stroke:0.15px currentColor;">Failed</div>
<div class="t" style="right:181.5px;top:378px;font-size:7px;color:#30323a;-webkit-text-stroke:0.08px currentColor;transform:scaleY(1.05);transform-origin:50% 6px;-webkit-text-stroke:0.35px currentColor;">5674</div>
<svg class="a" style="left:564.5px;top:379.0px" width="3" height="5" viewBox="0 0 3 5"><path d="M0.5 0.5 L2.4 2.5 L0.5 4.5" fill="none" stroke="#9a9da6" stroke-width="0.8"/></svg>
<div class="a" style="left:439.4px;top:390.3px;width:128.3px;height:0.7px;background:#f4f5f7"></div>
<div class="a" style="left:581.75px;top:256.5px;width:147.25px;height:150px;background:#fff;border-radius:2px;box-shadow:0 0 1.5px rgba(40,40,70,0.07)"></div>
<div class="t" style="left:592.2px;top:270px;font-size:8.2px;color:#2b2d34;font-weight:700;-webkit-text-stroke:0.2px currentColor;transform:scaleY(1.15);transform-origin:50% 6px;">Trips Perfomance</div>
<div class="t" style="left:592.2px;top:300px;font-size:6.5px;color:#3a3c44;-webkit-text-stroke:0.08px currentColor;transform:scaleY(1.05);transform-origin:50% 5px;-webkit-text-stroke:0.3px currentColor;">345</div>
<div class="t" style="left:606.9px;top:301px;font-size:5.55px;color:#a3a6b0;-webkit-text-stroke:0.08px currentColor;">Planned for today</div>
<div class="t" style="right:18px;top:301px;font-size:5.5px;color:#a3a6b0;-webkit-text-stroke:0.08px currentColor;">23 Left</div>
<div class="a" style="left:592px;top:312px;width:126.4px;height:5.8px;background:#ebebf0"></div>
<div class="a" style="left:592px;top:312px;width:37.3px;height:5.8px;background:#17876c"></div>
<div class="a" style="left:629.3px;top:312px;width:19.9px;height:5.8px;background:#3cb67a"></div>
<div class="a" style="left:649.2px;top:312px;width:13.2px;height:5.8px;background:#f5ab3c"></div>
<div class="a" style="left:662.4px;top:312px;width:5.8px;height:5.8px;background:#e5574b"></div>
<div class="t" style="left:592.2px;top:333px;font-size:5.55px;color:#17876c;font-weight:700;-webkit-text-stroke:0.2px currentColor;transform:scaleY(1.15);transform-origin:50% 4px;-webkit-text-stroke:0.05px currentColor;">40% / 567</div>
<div class="t" style="left:592.2px;top:341px;font-size:5.4px;color:#a3a6b0;-webkit-text-stroke:0.08px currentColor;">Live Trips</div>
<div class="t" style="left:660.1px;top:333px;font-size:5.55px;color:#3cb67a;font-weight:700;-webkit-text-stroke:0.2px currentColor;transform:scaleY(1.15);transform-origin:50% 4px;-webkit-text-stroke:0.05px currentColor;">30% / 567</div>
<div class="t" style="left:660.1px;top:341px;font-size:5.4px;color:#a3a6b0;-webkit-text-stroke:0.08px currentColor;">Completed</div>
<div class="t" style="left:592.2px;top:361px;font-size:5.55px;color:#f5ab3c;font-weight:700;-webkit-text-stroke:0.2px currentColor;transform:scaleY(1.15);transform-origin:50% 4px;-webkit-text-stroke:0.05px currentColor;">40% / 567</div>
<div class="t" style="left:592.2px;top:369px;font-size:5.4px;color:#a3a6b0;-webkit-text-stroke:0.08px currentColor;">Being Late</div>
<div class="t" style="left:660.1px;top:361px;font-size:5.55px;color:#e5574b;font-weight:700;-webkit-text-stroke:0.2px currentColor;transform:scaleY(1.15);transform-origin:50% 4px;-webkit-text-stroke:0.05px currentColor;">40% / 567</div>
<div class="t" style="left:660.1px;top:369px;font-size:5.4px;color:#a3a6b0;-webkit-text-stroke:0.08px currentColor;">Failed</div>
<div class="a" style="left:592px;top:379px;width:127.6px;height:0.7px;background:#f1f2f4"></div>
<div class="t" style="left:592.2px;top:390px;font-size:6.5px;color:#3a3c44;-webkit-text-stroke:0.08px currentColor;transform:scaleY(1.05);transform-origin:50% 5px;-webkit-text-stroke:0.3px currentColor;">350</div>
<div class="t" style="left:606.8px;top:391px;font-size:5.65px;color:#a3a6b0;-webkit-text-stroke:0.08px currentColor;">Planned for tomorrow</div>
<div class="a" style="left:119px;top:415px;width:147.25px;height:20px;background:#fff;border-radius:2px;box-shadow:0 0 1.5px rgba(40,40,70,0.07)"></div>
<div class="a" style="left:273.25px;top:415px;width:147.25px;height:20px;background:#fff;border-radius:2px;box-shadow:0 0 1.5px rgba(40,40,70,0.07)"></div>
<div class="a" style="left:427.5px;top:415px;width:147.25px;height:20px;background:#fff;border-radius:2px;box-shadow:0 0 1.5px rgba(40,40,70,0.07)"></div>
<div class="a" style="left:581.75px;top:415px;width:147.25px;height:20px;background:#fff;border-radius:2px;box-shadow:0 0 1.5px rgba(40,40,70,0.07)"></div>
<div class="a" style="left:0px;top:24px;width:736px;height:1px;background:rgba(13,136,113,0.12)"></div>
</body></html>
